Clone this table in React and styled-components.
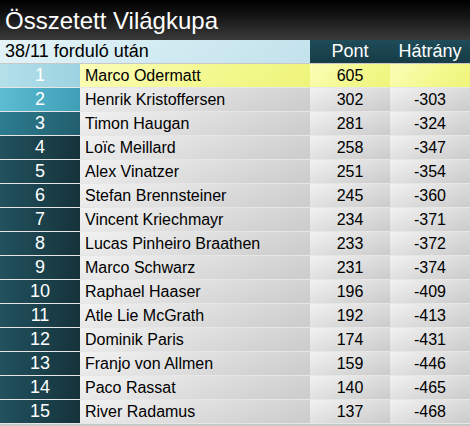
import React from "react";
import styled, { createGlobalStyle } from "styled-components";

const GlobalStyle = createGlobalStyle`
	body {
		margin: 0;
		background: #ffffff;
		font-family: "Liberation Sans", Arial, sans-serif;
	}
`;

const Board = styled.div`
	width: 470px;
	height: 426px;
	overflow: hidden;
	background: #c8c8c8;
`;

const Title = styled.div`
	height: 40px;
	display: flex;
	align-items: center;
	padding: 2px 0 0 5px;
	box-sizing: border-box;
	background: linear-gradient(to bottom, #000000 0%, #151515 40%, #3a3a3a 100%);
	color: #ffffff;
	font-size: 24px;
`;

const Row = styled.div`
	display: grid;
	grid-template-columns: 80px 230px 80px 80px;
	height: 23px;
	border-bottom: 1px solid ${(p) => (p.$head ? "transparent" : "#e6e6e6")};
	font-size: 16px;
	line-height: 23px;
`;

const Round = styled.div`
	grid-column: 1 / 3;
	padding-left: 5px;
	color: #000;
	font-size: 18px;
	background: linear-gradient(135deg, #e4f4f8 0%, #cfe9f1 60%, #c3e2ec 100%);
`;

const HeadCell = styled.div`
	text-align: center;
	color: #ffffff;
	font-size: 18px;
	background: linear-gradient(to bottom, #1e4c58 0%, #163c46 100%);
`;

const rankBg = (n) => {
	if (n === 1) return "linear-gradient(to right, #b4e0ea 0%, #9cd2e0 100%)";
	if (n === 2) return "linear-gradient(to right, #5cbcd2 0%, #3e9fb7 100%)";
	if (n === 3) return "linear-gradient(to right, #2c7c8f 0%, #225f6e 100%)";
	return "linear-gradient(to right, #22525e 0%, #1a3f49 60%, #15323a 100%)";
};

const Rank = styled.div`
	text-align: center;
	color: #ffffff;
	font-size: 18px;
	background: ${(p) => rankBg(p.$n)};
`;

const Cell = styled.div`
	color: #000;
	padding-left: ${(p) => (p.$left ? "5px" : "0")};
	text-align: ${(p) => (p.$left ? "left" : "center")};
	background: ${(p) =>
		p.$lead
			? "linear-gradient(135deg, #fbfdb8 0%, #f3f88c 60%, #eef47a 100%)"
			: "linear-gradient(160deg, #f2f2f2 0%, #dcdcdc 55%, #cbcbcb 100%)"};
`;

const rows = [
	["Marco Odermatt", 605, ""],
	["Henrik Kristoffersen", 302, -303],
	["Timon Haugan", 281, -324],
	["Loïc Meillard", 258, -347],
	["Alex Vinatzer", 251, -354],
	["Stefan Brennsteiner", 245, -360],
	["Vincent Kriechmayr", 234, -371],
	["Lucas Pinheiro Braathen", 233, -372],
	["Marco Schwarz", 231, -374],
	["Raphael Haaser", 196, -409],
	["Atle Lie McGrath", 192, -413],
	["Dominik Paris", 174, -431],
	["Franjo von Allmen", 159, -446],
	["Paco Rassat", 140, -465],
	["River Radamus", 137, -468],
];

export default function App() {
	return (
		<Board>
			<GlobalStyle />
			<Title>Összetett Világkupa</Title>
			<Row $head>
				<Round>38/11 forduló után</Round>
				<HeadCell>Pont</HeadCell>
				<HeadCell>Hátrány</HeadCell>
			</Row>
			{rows.map(([name, pts, gap], i) => (
				<Row key={name}>
					<Rank $n={i + 1}>{i + 1}</Rank>
					<Cell $left $lead={i === 0}>
						{name}
					</Cell>
					<Cell $lead={i === 0}>{pts}</Cell>
					<Cell $lead={i === 0}>{gap}</Cell>
				</Row>
			))}
		</Board>
	);
}
